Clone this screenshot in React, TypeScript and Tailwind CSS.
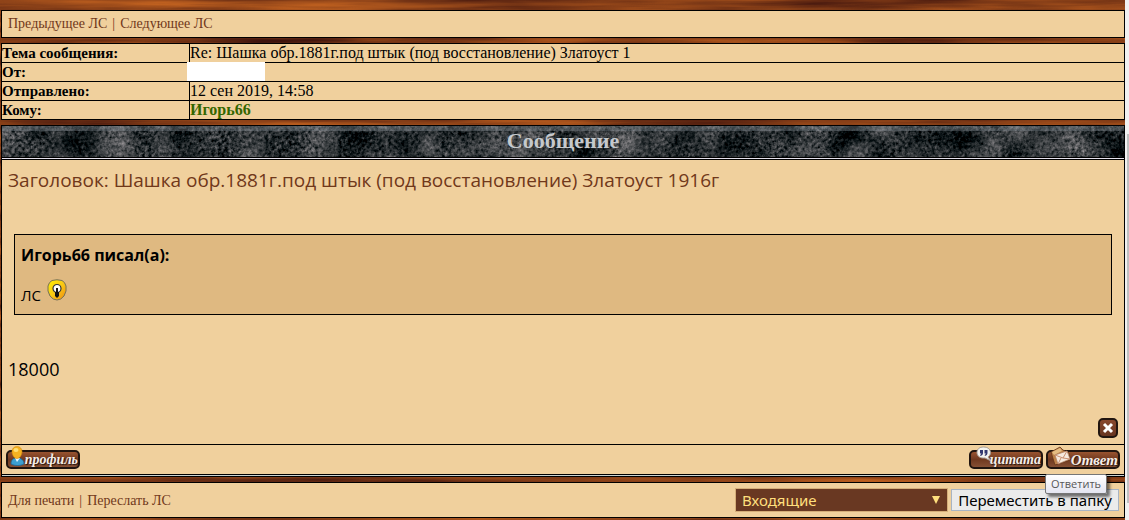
import { useState } from 'react'
import type { ReactNode } from 'react'

const details: { label: string; value: ReactNode }[] = [
  {
    label: 'Тема сообщения:',
    value: 'Re: Шашка обр.1881г.под штык (под восстановление) Златоуст 1',
  },
  {
    label: 'От:',
    value: <span className="absolute top-0 -left-[3px] h-[19px] w-[78px] -translate-y-px bg-white" />,
  },
  { label: 'Отправлено:', value: '12 сен 2019, 14:58' },
  {
    label: 'Кому:',
    value: (
      <a href="#user" className="font-bold text-[#336600]">
        Игорь66
      </a>
    ),
  },
]

function Wood() {
  return (
    <svg className="absolute inset-0 -z-10 h-full w-full" aria-hidden="true">
      <filter id="wood" x="0" y="0" width="100%" height="100%" colorInterpolationFilters="sRGB">
        <feTurbulence type="fractalNoise" baseFrequency="0.005 0.09" numOctaves="4" seed="8" />
        <feColorMatrix values="0.7 0 0 0 0.17  0.42 0 0 0 0.03  0.1 0 0 0 0.04  0 0 0 0 1" />
      </filter>
      <rect width="100%" height="100%" filter="url(#wood)" />
    </svg>
  )
}

function Marble() {
  return (
    <svg className="absolute inset-0 h-full w-full" aria-hidden="true">
      <filter id="marble" x="0" y="0" width="100%" height="100%" colorInterpolationFilters="sRGB">
        <feTurbulence type="fractalNoise" baseFrequency="0.03" numOctaves="2" seed="4" result="clouds" />
        <feTurbulence type="fractalNoise" baseFrequency="0.3" numOctaves="3" seed="9" result="grain" />
        <feComposite in="clouds" in2="grain" operator="arithmetic" k2="0.5" k3="0.5" />
        <feColorMatrix values="1.2 0 0 0 -0.42  1.1 0 0 0 -0.35  1.1 0 0 0 -0.34  0 0 0 0 1" />
      </filter>
      <rect width="100%" height="100%" filter="url(#marble)" />
      <rect width="100%" height="5" fill="#929aa2" opacity="0.35" />
    </svg>
  )
}

function Bulb() {
  return (
    <svg width="20" height="22" viewBox="0 0 20 22" className="mb-1" role="img" aria-label="Идея">
      <defs>
        <linearGradient id="bulb" x1="0" y1="0" x2="1" y2="1">
          <stop offset="0" stopColor="#fff200" />
          <stop offset="0.5" stopColor="#f9c915" />
          <stop offset="1" stopColor="#f08a10" />
        </linearGradient>
      </defs>
      <path
        d="M5 1.500Q10 0 15 1.500Q18 3 19 7Q20 12 17 17Q14 21 10 21Q6 21 3 17Q0 12 1 7Q2 3 5 1.500z"
        fill="url(#bulb)"
        stroke="#74705a"
      />
      <circle cx="10" cy="9.500" r="4" fill="#fff" stroke="#333" strokeWidth="1.200" />
      <path d="M10 9v5" stroke="#111" strokeWidth="2" />
      <path d="M8 13h4v4l-2 2-2-2z" fill="#111" />
    </svg>
  )
}

function PersonIcon() {
  return (
    <svg width="16" height="20" viewBox="0 0 16 20" className="absolute -top-1 left-1" aria-hidden="true">
      <path d="M1 18c0-4 2-6 6-6s7 2 7 6c-4 2-9 2-13 0z" fill="#3c9fd0" stroke="#1d6593" strokeWidth="0.800" />
      <path d="M5 12l2 4 3-4z" fill="#e8f7ff" />
      <path d="M7 .6c3 0 5 2 5 5s-2 7-5 7-5-4-5-7 2-5 5-5z" fill="#f6b221" stroke="#d58a0c" strokeWidth="0.600" />
      <ellipse cx="6" cy="4" rx="2.500" ry="2" fill="#ffdf75" />
    </svg>
  )
}

function QuoteIcon() {
  return (
    <svg width="18" height="18" viewBox="0 0 18 18" className="absolute -top-1 left-1.5" aria-hidden="true">
      <path
        d="M8.500 1c4.500 0 7 2.500 7 5.500 0 2-1 3.500-2.500 4.500l3 4-6-3c-5 .5-8-2-8-5.500S4.500 1 8.500 1z"
        fill="#f4f3ee"
        stroke="#a59a90"
      />
      <path
        d="M5 4h3v3c0 1.500-1 2.500-2.500 3l-.4-1c.8-.4 1.200-1 1.200-1.500H5zM9.500 4h3v3c0 1.500-1 2.500-2.500 3l-.4-1c.8-.4 1.200-1 1.200-1.500H9.500z"
        fill="#32386f"
      />
    </svg>
  )
}

function MailIcon() {
  return (
    <svg width="22" height="21" viewBox="0 0 22 21" className="absolute -top-1 left-1" aria-hidden="true">
      <path d="M1 6l9-5 3 3 6 3 1 7-15 5z" fill="#bd8149" stroke="#63351b" strokeWidth="0.800" />
      <path d="M2 6l8-4 2 3-8 4z" fill="#e4bc82" />
      <path d="M5 9l12-4 3 8-12 5z" fill="#f6e9de" stroke="#ae7f66" strokeWidth="0.700" />
      <path d="M5 9l8 3 4-7M8 18l3-6M20 13l-7-1" fill="none" stroke="#c98f70" />
    </svg>
  )
}

interface PlankProps {
  icon: ReactNode
  label: string
  textClass: string
}

function Plank({ icon, label, textClass }: PlankProps) {
  return (
    <button
      type="button"
      className="relative h-[19px] w-[74px] rounded-[5px] border-2 border-[#21150f] bg-linear-to-b from-[#995430] via-[#70391f] to-[#865034]"
    >
      <span className="absolute -inset-[2px]">
        {icon}
        <span
          className={`absolute right-0.5 font-["Liberation_Serif",serif] leading-[20px] font-bold text-[#f5eee8] italic [text-shadow:1px_1px_1px_#21150f] ${textClass}`}
        >
          {label}
        </span>
      </span>
    </button>
  )
}

const bar = 'border border-black bg-[#f0d09d]'

export default function App() {
  const [folder, setFolder] = useState('inbox')

  return (
    <div className='flex min-h-screen bg-[#f1f1f1] font-["Liberation_Serif",serif] text-black'>
      <main className="relative isolate flex min-w-0 flex-1 flex-col gap-[5px] bg-[#803c16] pt-[10px] pb-[2px] pl-px">
        <Wood />
        <nav className={`${bar} px-1.5 text-[14px] leading-[26px] text-[#70381a]`}>
          <a href="#prev">Предыдущее ЛС</a>
          <span className="mx-[5px]">|</span>
          <a href="#next">Следующее ЛС</a>
        </nav>

        <table className="w-full border-collapse bg-[#f0d09d] text-left">
          <tbody>
            {details.map(({ label, value }) => (
              <tr key={label} className="h-[19px]">
                <th scope="row" className="w-[188px] border border-black p-0 text-[15px] leading-[18px]">
                  {label}
                </th>
                <td className="relative border border-black p-0 text-[16px] leading-[18px]">{value}</td>
              </tr>
            ))}
          </tbody>
        </table>

        <section className={bar}>
          <header className="relative h-[31px] text-center">
            <Marble />
            <h1 className="relative text-[22px] leading-[30px] font-bold text-[#c5c9cc]">Сообщение</h1>
          </header>
          <div className="h-[3px] border-y border-black bg-[#e5e2ec]" />

          <article className='flex min-h-[284px] flex-col px-1.5 font-["Open_Sans",sans-serif]'>
            <h2 className="mt-1.5 text-[19px] leading-7 text-[#70381a]">
              Заголовок: Шашка обр.1881г.под штык (под восстановление) Златоуст 1916г
            </h2>
            <blockquote className="mx-1.5 mt-10 h-[81px] border border-black bg-[#dfb981] px-1.5 pt-2">
              <p className="text-[16px] leading-6 font-bold">Игорь66 писал(а):</p>
              <p className="mt-3 flex items-end gap-1.5 text-[15px] leading-5">
                ЛС
                <Bulb />
              </p>
            </blockquote>
            <p className="mt-10 text-[18px] leading-7">18000</p>
            <button
              type="button"
              aria-label="Удалить"
              className="mt-auto mb-1.5 flex size-5 items-center justify-center self-end rounded-[5px] border-2 border-[#21150f] bg-linear-to-b from-[#89482c] to-[#673520]"
            >
              <svg width="12" height="12" viewBox="0 0 12 12" aria-hidden="true">
                <path d="M2 2l8 8M10 2l-8 8" stroke="#fff" strokeWidth="3" />
              </svg>
            </button>
          </article>

          <footer className="flex h-[30px] items-center gap-[3px] border-t border-black px-1">
            <Plank icon={<PersonIcon />} label="профиль" textClass="text-[14px]" />
            <span className="flex-1" />
            <Plank icon={<QuoteIcon />} label="цитата" textClass="text-[14px]" />
            <div className="relative flex">
              <Plank icon={<MailIcon />} label="Ответ" textClass="text-[15px]" />
              <span
                role="tooltip"
                className='absolute top-6 -left-px z-10 rounded-[2px] border border-[#767676] bg-linear-to-b from-white to-[#e4e5f0] px-[5px] font-["Open_Sans",sans-serif] text-[11px] leading-[18px] text-[#575757] shadow-[3px_3px_3px_#0008]'
              >
                Ответить
              </span>
            </div>
          </footer>
          <div className="h-[2px] border-t border-black bg-[#cbd3d2]" />
        </section>

        <div className={`${bar} flex h-9 items-center justify-between pr-[5px] pl-1.5`}>
          <nav className="text-[14px] text-[#70381a]">
            <a href="#print">Для печати</a>
            <span className="mx-[5px]">|</span>
            <a href="#forward">Переслать ЛС</a>
          </nav>
          <form
            className='flex items-center gap-[3px] font-["Noto_Sans",sans-serif] text-[15px]'
            onSubmit={(e) => e.preventDefault()}
          >
            <div className="relative">
              <select
                aria-label="Папка"
                value={folder}
                onChange={(e) => setFolder(e.target.value)}
                className="block h-6 w-[213px] appearance-none border border-[#d5ae79] bg-[#693822] px-1.5 text-[#ffdf7d]"
              >
                <option value="inbox">Входящие</option>
                <option value="sent">Отправленные</option>
              </select>
              <svg
                width="8"
                height="8"
                viewBox="0 0 8 8"
                className="pointer-events-none absolute top-2 right-2"
                aria-hidden="true"
              >
                <path d="M0 0h8L4 8z" fill="#ffdf7d" />
              </svg>
            </div>
            <button
              type="submit"
              className="h-[22px] w-[168px] border border-[#a8b4c4] bg-[#ebebeb] leading-5 whitespace-nowrap"
            >
              Переместить в папку
            </button>
          </form>
        </div>
      </main>
      <div className="w-1 pt-[134px] pl-0.5" aria-hidden="true">
        <div className="h-[369px] bg-[#c1c1c1]" />
      </div>
    </div>
  )
}
